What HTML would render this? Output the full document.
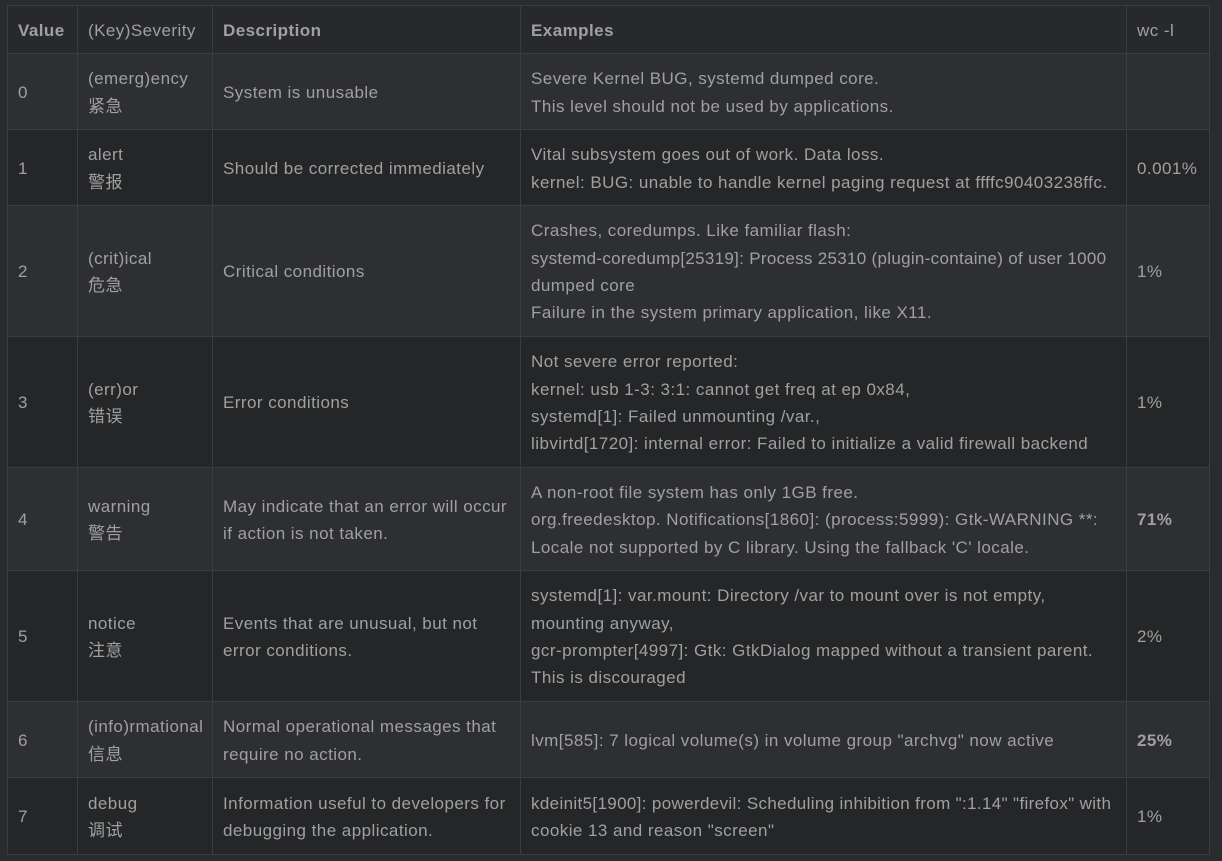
<!DOCTYPE html>
<html><head><meta charset="utf-8"><style>
html,body{margin:0;background:#2a2b2e;}
body{width:1222px;height:861px;overflow:hidden;font-family:"Liberation Sans","Noto Sans CJK SC",sans-serif;font-size:17px;letter-spacing:0.45px;color:#a0a0a0;}
table{position:absolute;left:7px;top:5px;border-collapse:collapse;table-layout:fixed;width:1202px;}
td,th{border:1px solid #3b3c3f;padding:2px 10px 0;line-height:27.3px;vertical-align:middle;text-align:left;font-weight:normal;white-space:nowrap;overflow:visible;}
th{height:45px;background:#28292c;}
th.b,b{font-weight:bold;}
tr.e td{background:#2e2f32;}
tr.o td{background:#252628;}
</style></head><body>
<table>
<colgroup><col style="width:70px"><col style="width:135px"><col style="width:308px"><col style="width:606px"><col style="width:83px"></colgroup>
<tr><th class="b">Value</th><th>(Key)Severity</th><th class="b">Description</th><th class="b">Examples</th><th>wc -l</th></tr>
<tr class="e" style="height:76px"><td>0</td><td>(emerg)ency<br>紧急</td><td>System is unusable</td><td>Severe Kernel BUG, systemd dumped core.<br>This level should not be used by applications.</td><td></td></tr>
<tr class="o" style="height:76px"><td>1</td><td>alert<br>警报</td><td>Should be corrected immediately</td><td>Vital subsystem goes out of work. Data loss.<br>kernel: BUG: unable to handle kernel paging request at ffffc90403238ffc.</td><td>0.001%</td></tr>
<tr class="e" style="height:131px"><td>2</td><td>(crit)ical<br>危急</td><td>Critical conditions</td><td>Crashes, coredumps. Like familiar flash:<br><span style="letter-spacing:0.3px">systemd-coredump[25319]: Process 25310 (plugin-containe) of user 1000</span><br>dumped core<br>Failure in the system primary application, like X11.</td><td>1%</td></tr>
<tr class="o" style="height:131px"><td>3</td><td>(err)or<br>错误</td><td>Error conditions</td><td>Not severe error reported:<br>kernel: usb 1-3: 3:1: cannot get freq at ep 0x84,<br>systemd[1]: Failed unmounting /var.,<br>libvirtd[1720]: internal error: Failed to initialize a valid firewall backend</td><td>1%</td></tr>
<tr class="e" style="height:103px"><td>4</td><td>warning<br>警告</td><td>May indicate that an error will occur<br>if action is not taken.</td><td>A non-root file system has only 1GB free.<br>org.freedesktop. Notifications[1860]: (process:5999): Gtk-WARNING **:<br>Locale not supported by C library. Using the fallback 'C' locale.</td><td><b>71%</b></td></tr>
<tr class="o" style="height:131px"><td>5</td><td>notice<br>注意</td><td>Events that are unusual, but not<br>error conditions.</td><td>systemd[1]: var.mount: Directory /var to mount over is not empty,<br>mounting anyway,<br>gcr-prompter[4997]: Gtk: GtkDialog mapped without a transient parent.<br>This is discouraged</td><td>2%</td></tr>
<tr class="e" style="height:76px"><td>6</td><td>(info)rmational<br>信息</td><td>Normal operational messages that<br>require no action.</td><td>lvm[585]: 7 logical volume(s) in volume group "archvg" now active</td><td><b>25%</b></td></tr>
<tr class="o" style="height:77px"><td>7</td><td>debug<br>调试</td><td>Information useful to developers for<br>debugging the application.</td><td><span style="letter-spacing:0.35px">kdeinit5[1900]: powerdevil: Scheduling inhibition from ":1.14" "firefox" with</span><br>cookie 13 and reason "screen"</td><td>1%</td></tr>
</table>
</body></html>
